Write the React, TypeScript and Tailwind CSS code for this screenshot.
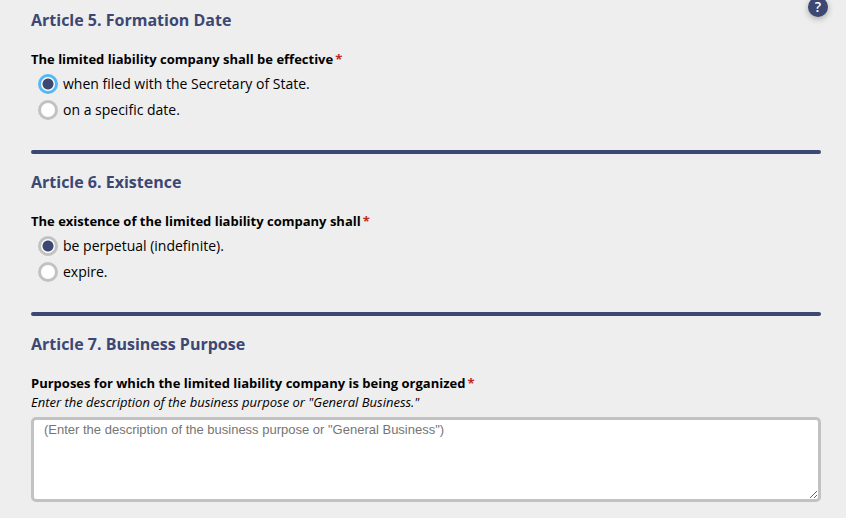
import type { ReactNode } from "react";

type Choice = { value: string; label: string };

function Question({ children }: { children: ReactNode }) {
  return (
    <>
      {children}
      <span className="ml-[2px] text-[#c0281c]">*</span>
    </>
  );
}

function ArticleHeading({ children }: { children: ReactNode }) {
  return <h2 className="mb-[17px] text-base leading-6 font-bold text-[#3c4772]">{children}</h2>;
}

function Divider() {
  return <hr className="mt-[30px] mb-4 h-1 rounded-full border-0 bg-[#3c4772]" />;
}

function ChoiceArticle({
  title,
  question,
  name,
  choices,
  focused = false,
}: {
  title: string;
  question: string;
  name: string;
  choices: Choice[];
  focused?: boolean;
}) {
  return (
    <section>
      <ArticleHeading>{title}</ArticleHeading>
      <fieldset>
        <legend className="text-[13px] leading-5 font-bold">
          <Question>{question}</Question>
        </legend>
        <div className="mt-[5px] flex flex-col gap-[6px] pl-[7px]">
          {choices.map((choice, i) => (
            <label key={choice.value} className="flex items-center gap-[5px] text-sm leading-5">
              <input
                type="radio"
                name={name}
                value={choice.value}
                defaultChecked={i === 0}
                autoFocus={focused && i === 0}
                className="size-5 shrink-0 appearance-none rounded-full border-[3px] border-[#c2c2c2] bg-white outline-none checked:bg-[radial-gradient(circle,#3c4772_5px,#ffffff_6px)] focus:border-[#55b8f3]"
              />
              {choice.label}
            </label>
          ))}
        </div>
      </fieldset>
    </section>
  );
}

export default function App() {
  return (
    <main className="relative min-h-screen bg-[#eeeeee] pt-2 pr-[25px] pb-4 pl-[31px] font-['Open_Sans',sans-serif] text-black">
      <button
        type="button"
        aria-label="Help"
        className="absolute -top-[3px] right-[18px] flex size-5 items-center justify-center rounded-full bg-[#3c4772] text-sm leading-none font-semibold text-white shadow-[0_2px_6px_rgba(0,0,0,0.3)]"
      >
        ?
      </button>
      <form>
        <ChoiceArticle
          title="Article 5. Formation Date"
          question="The limited liability company shall be effective"
          name="effective"
          focused
          choices={[
            { value: "filed", label: "when filed with the Secretary of State." },
            { value: "date", label: "on a specific date." },
          ]}
        />
        <Divider />
        <ChoiceArticle
          title="Article 6. Existence"
          question="The existence of the limited liability company shall"
          name="existence"
          choices={[
            { value: "perpetual", label: "be perpetual (indefinite)." },
            { value: "expire", label: "expire." },
          ]}
        />
        <Divider />
        <section>
          <ArticleHeading>Article 7. Business Purpose</ArticleHeading>
          <label htmlFor="purpose" className="block text-[13px] leading-5 font-bold">
            <Question>Purposes for which the limited liability company is being organized</Question>
          </label>
          <p id="purpose-hint" className="text-[13px] leading-[18px] italic">
            Enter the description of the business purpose or "General Business."
          </p>
          <textarea
            id="purpose"
            aria-describedby="purpose-hint"
            rows={5}
            placeholder={'(Enter the description of the business purpose or "General Business")'}
            className="mt-[6px] block h-[85px] w-full rounded-[5px] border-[3px] border-[#c2c2c2] bg-white px-[10px] py-[2px] font-['Liberation_Sans',Arial,sans-serif] text-[13px] leading-4 placeholder:text-[#757575]"
          />
        </section>
      </form>
    </main>
  );
}
